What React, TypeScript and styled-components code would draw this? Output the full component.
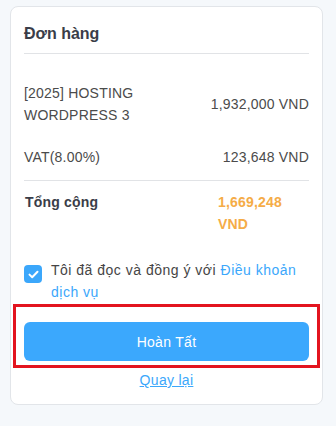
import React, { useState } from "react";
import styled, { createGlobalStyle } from "styled-components";

const GlobalStyle = createGlobalStyle`
  body {
    margin: 0;
    background: #f5f8fb;
    font-family: "Liberation Sans", Arial, sans-serif;
  }
`;

const Page = styled.div`
  padding: 6px 13px 20px 10px;
`;

const Card = styled.div`
  background: #ffffff;
  border: 1px solid #e2e5e9;
  border-radius: 8px;
  padding: 0 13px 14px;
`;

const Header = styled.div`
  padding: 16px 0 8px;
  border-bottom: 1px solid #e1e3e6;
  font-size: 16px;
  line-height: 22px;
  font-weight: 700;
  color: #3a3d48;
`;

const Items = styled.div`
  padding-top: 28px;
  display: flex;
  flex-direction: column;
  gap: 20px;
`;

const Row = styled.div`
  display: flex;
  justify-content: space-between;
  align-items: center;
  font-size: 14px;
  line-height: 22px;
  letter-spacing: 0.2px;
  color: #4b4b4b;
`;

const Name = styled.div`
  max-width: 150px;
`;

const Price = styled.div`
  text-align: right;
`;

const Divider = styled.div`
  height: 1px;
  background: #e1e3e6;
  margin-top: 12px;
`;

const TotalRow = styled(Row)`
  align-items: flex-start;
  padding-top: 10px;
  font-weight: 700;
  color: #3a3d48;
`;

const TotalLabel = styled.div`
  padding-left: 1px;
`;

const TotalValue = styled.div`
  width: 91px;
  color: #f5ac47;
`;

const Agree = styled.label`
  display: flex;
  align-items: flex-start;
  gap: 9px;
  margin-top: 24px;
  font-size: 14px;
  line-height: 22px;
  letter-spacing: 0.5px;
  color: #454545;
  cursor: pointer;
`;

const Box = styled.span<{ checked: boolean }>`
  flex: none;
  width: 18px;
  height: 18px;
  margin-top: 6px;
  border-radius: 4px;
  background: ${(p) => (p.checked ? "#3ba7fb" : "#ffffff")};
  border: ${(p) => (p.checked ? "none" : "1px solid #c7ccd3")};
  display: flex;
  align-items: center;
  justify-content: center;
`;

const Link = styled.a`
  color: #3ba7fb;
  text-decoration: none;
`;

const Highlight = styled.div`
  margin: 1px -11px 0;
  padding: 15px 8px 4px;
  border: 3px solid #e3141f;
`;

const Button = styled.button`
  display: block;
  width: 100%;
  height: 39px;
  border: none;
  border-radius: 6px;
  background: #3ba8fd;
  color: #ffffff;
  font-family: "Liberation Sans", Arial, sans-serif;
  font-size: 14px;
  letter-spacing: 0.3px;
  cursor: pointer;
`;

const Back = styled.a`
  display: block;
  margin-top: 2px;
  text-align: center;
  font-size: 14px;
  line-height: 20px;
  letter-spacing: 0.3px;
  color: #3ba7fb;
  text-decoration: underline;
`;

const App: React.FC = () => {
  const [checked, setChecked] = useState(true);
  return (
    <Page>
      <GlobalStyle />
      <Card>
        <Header>Đơn hàng</Header>
        <Items>
          <Row>
            <Name>[2025] HOSTING WORDPRESS 3</Name>
            <Price>1,932,000 VND</Price>
          </Row>
          <Row>
            <Name>VAT(8.00%)</Name>
            <Price>123,648 VND</Price>
          </Row>
        </Items>
        <Divider />
        <TotalRow>
          <TotalLabel>Tổng cộng</TotalLabel>
          <TotalValue>1,669,248 VND</TotalValue>
        </TotalRow>
        <Agree onClick={() => setChecked(!checked)}>
          <Box checked={checked}>
            {checked && (
              <svg width="11" height="9" viewBox="0 0 11 9">
                <path d="M1.5 4.6 L4.2 7.2 L9.5 1.8" fill="none" stroke="#fff" strokeWidth="2" strokeLinecap="round" strokeLinejoin="round" />
              </svg>
            )}
          </Box>
          <span>
            Tôi đã đọc và đồng ý với <Link href="#">Điều khoản dịch vụ</Link>
          </span>
        </Agree>
        <Highlight>
          <Button>Hoàn Tất</Button>
        </Highlight>
        <Back href="#">Quay lại</Back>
      </Card>
    </Page>
  );
};

export default App;
